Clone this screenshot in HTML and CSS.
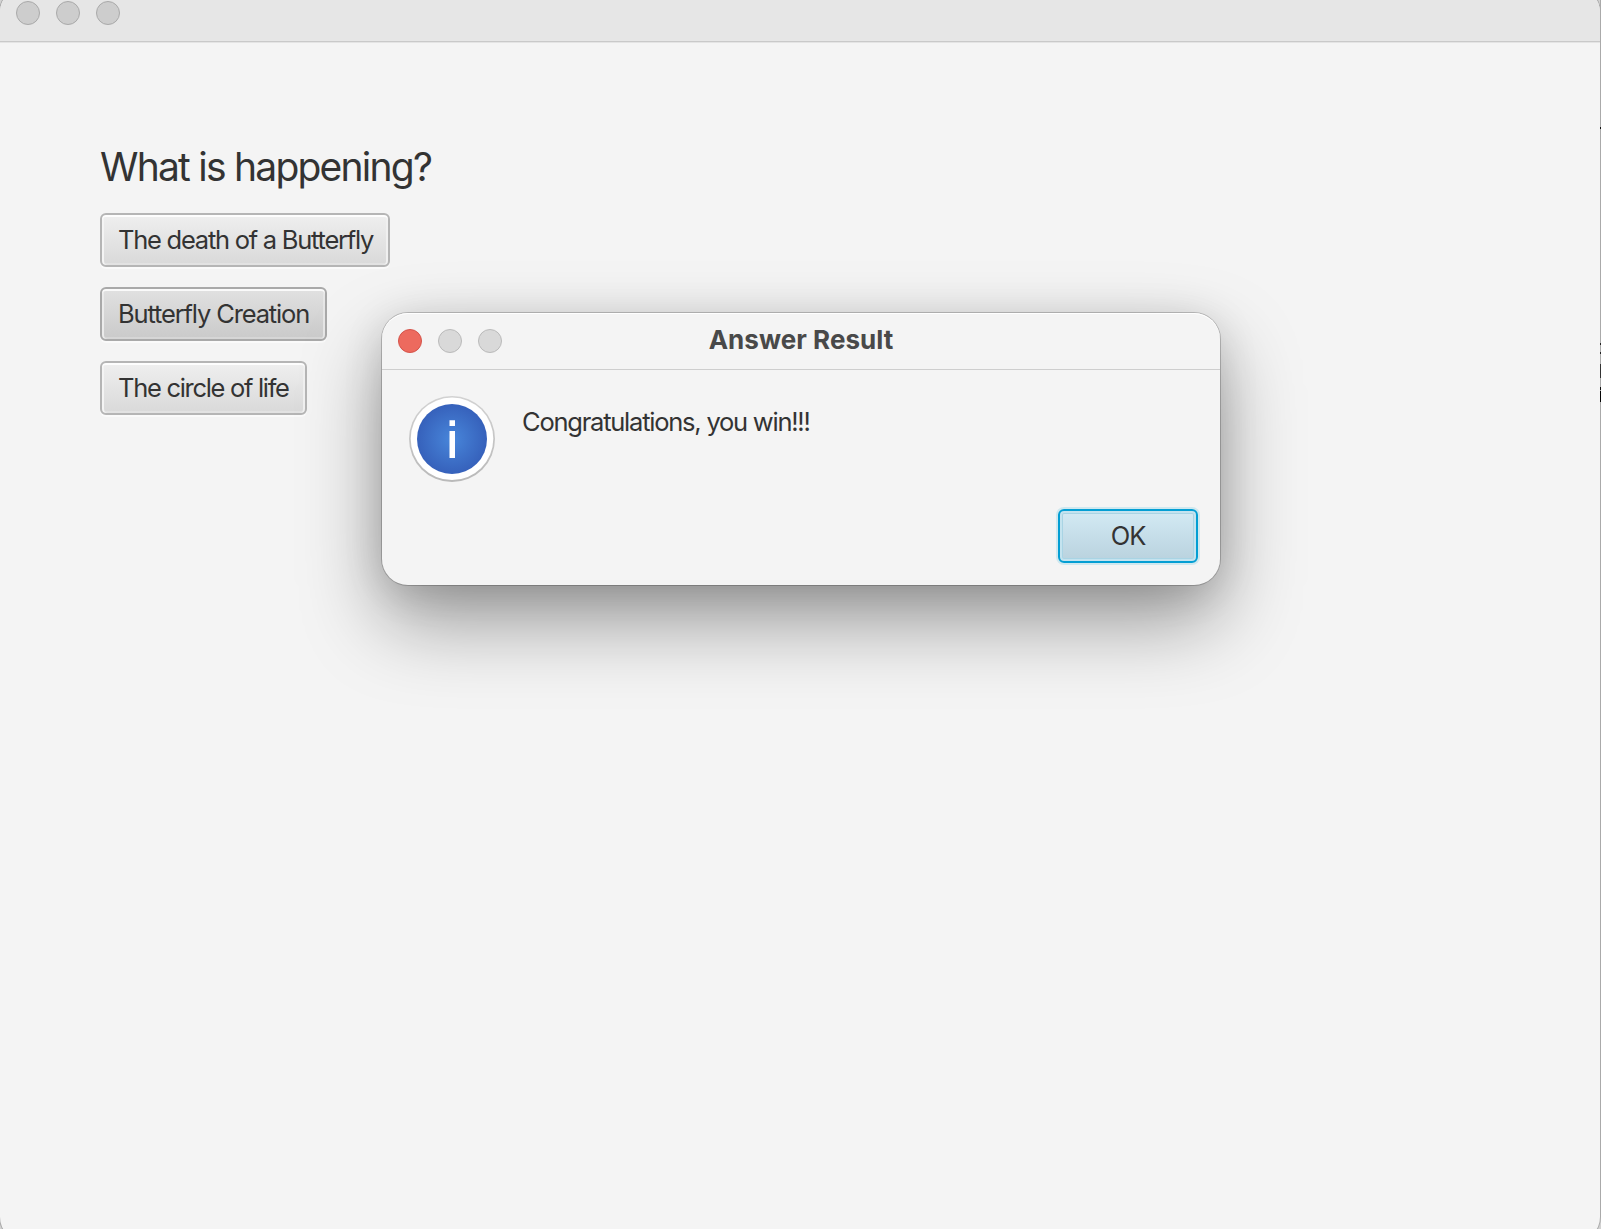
FILE: index.html
```html
<!DOCTYPE html>
<html lang="en">
<head>
<meta charset="utf-8">
<title>Quiz</title>
<link rel="stylesheet" href="styles.css">
</head>
<body>
<div class="desktop">
  <div class="window">
    <header class="titlebar">
      <span class="light"></span><span class="light"></span><span class="light"></span>
    </header>
    <main class="content">
      <h1 class="question">What is happening?</h1>
      <button class="answer answer-death">The death of a Butterfly</button>
      <button class="answer answer-creation pressed">Butterfly Creation</button>
      <button class="answer answer-circle">The circle of life</button>
    </main>
  </div>
  <div class="edge"></div>
</div>
<section class="dialog" role="dialog">
  <header class="dialog-bar">
    <div class="lights">
      <span class="light close"></span><span class="light dim"></span><span class="light dim"></span>
    </div>
    <h2 class="dialog-title">Answer Result</h2>
    <div></div>
  </header>
  <div class="dialog-body">
    <svg class="info" viewBox="0 0 86 86" aria-hidden="true">
      <defs>
        <linearGradient id="rim" x1="0" y1="0" x2="0" y2="1"><stop offset="0" stop-color="#d2d2d2"/><stop offset="1" stop-color="#b9b9b9"/></linearGradient>
        <radialGradient id="blue"><stop offset="0" stop-color="#4886da"/><stop offset="1" stop-color="#3661bb"/></radialGradient>
      </defs>
      <circle cx="43" cy="43" r="43" fill="url(#rim)"/>
      <circle cx="43" cy="42.8" r="41.3" fill="#fff"/>
      <circle cx="43" cy="43" r="35" fill="url(#blue)"/>
      <path d="M40.5 24.3h5.5v5.7h-5.5zM40.5 35h5.5v27h-5.5z" fill="#fff"/>
    </svg>
    <p class="message">Congratulations, you win!!!</p>
  </div>
  <footer class="dialog-actions"><button class="ok">OK</button></footer>
</section>
</body>
</html>
```
FILE: styles.css
```css
* { box-sizing: border-box; }
body {
  margin: 0;
  width: 1601px;
  height: 1229px;
  overflow: hidden;
  position: relative;
  background: #d2d2d2;
  font-family: Inter, "Liberation Sans", sans-serif;
  color: #333;
}
h1, h2, p { margin: 0; font-weight: 400; }
button { font: inherit; color: inherit; padding: 0; white-space: nowrap; }
.desktop { display: flex; height: 1229px; }
.window {
  flex: 1;
  height: 1253px;
  margin-top: -12px;
  border-radius: 24px;
  overflow: hidden;
  background: #f4f4f4;
  box-shadow: 0 0 0 1px #a9a9a9;
}
.titlebar {
  height: 55px;
  padding: 13px 0 0 16px;
  display: flex;
  gap: 16px;
  background: #e6e6e6;
  border-bottom: 1px solid #e4e4e4;
  box-shadow: inset 0 -1px #c9c9c9;
}
.light {
  width: 24px;
  height: 24px;
  border-radius: 50%;
  background: #cdcdcd;
  border: 1px solid #a9a9a9;
}
.light.dim { background: #d9d9d9; border-color: #bababa; }
.light.close { background: #ed6a5e; border-color: #d5534a; }
.edge {
  width: 1px;
  height: 1214px;
  background: linear-gradient(#aaa 0 127px, #111 127px 129px, #aaa 129px 343px, #222 343px 345px, #aaa 345px 352px, #222 352px 354px, #aaa 354px 364px, #333 364px 378px, #aaa 378px 387px, #111 387px 390px, #aaa 390px 391px, #050505 391px 402px, #aaa 402px);
  z-index: 1;
}
.content {
  padding: 99px 0 0 100px;
  display: flex;
  flex-direction: column;
  align-items: flex-start;
  gap: 20px;
}
.question {
  height: 51px;
  line-height: 50px;
  font-size: 39px;
  letter-spacing: -1.77px;
}
.answer {
  height: 54px;
  font-size: 25.5px;
  line-height: 50px;
  text-align: left;
  padding-left: 16px;
  border: 2px solid #b5b5b5;
  border-radius: 6px;
  background: linear-gradient(#efefef, #d9d9d9);
  box-shadow: inset 0 2px #fdfdfd, inset 2px 0 #f4f4f4, inset -2px 0 #f0f0f0, inset 0 -2px #e2e2e2, 0 2px #fafafa;
}
.answer.pressed { background: linear-gradient(#e1e1e1, #cacaca); border-color: #a9a9a9; box-shadow: inset 0 2px #fafafa, inset 2px 0 #ebebeb, inset -2px 0 #e6e6e6, inset 0 -2px #d6d6d6, 0 2px #fafafa; }
.answer-death { width: 290px; letter-spacing: -1.25px; }
.answer-creation { width: 227px; letter-spacing: -1.15px; }
.answer-circle { width: 207px; letter-spacing: -1.3px; }
.dialog {
  position: absolute;
  left: 382px;
  top: 313px;
  width: 838px;
  height: 272px;
  border-radius: 26px;
  background: #f4f4f4;
  box-shadow: inset 0 1px #fff, 0 0 0 1px rgba(0,0,0,.2), 0 36px 80px rgba(0,0,0,.38), 0 6px 40px rgba(0,0,0,.12);
}
.dialog-bar {
  height: 57px;
  padding: 0 16px;
  display: grid;
  grid-template-columns: 1fr auto 1fr;
  border-bottom: 1px solid #cecece;
}
.lights { display: flex; gap: 16px; padding-top: 16px; }
.dialog-title { font-size: 26px; font-weight: 700; color: #494949; line-height: 54px; letter-spacing: 0.05px; }
.dialog-body { display: flex; gap: 27px; padding: 26px 0 0 27px; }
.info { width: 86px; height: 86px; flex: none; }
.message { font-size: 25.5px; line-height: 52px; letter-spacing: -1.23px; }
.dialog-actions { display: flex; justify-content: flex-end; padding: 27px 22px 0 0; }
.ok {
  width: 140px;
  height: 54px;
  font-size: 25.5px;
  line-height: 50px;
  letter-spacing: -1px;
  border: 2px solid #039ed3;
  border-radius: 6px;
  background: linear-gradient(#d3eaf4, #b9d2de);
  box-shadow: 0 0 0 2px #cfe8ef, inset 0 0 0 2px #c4e3ef, inset 0 0 0 3px #a9d4e4;
}
```
